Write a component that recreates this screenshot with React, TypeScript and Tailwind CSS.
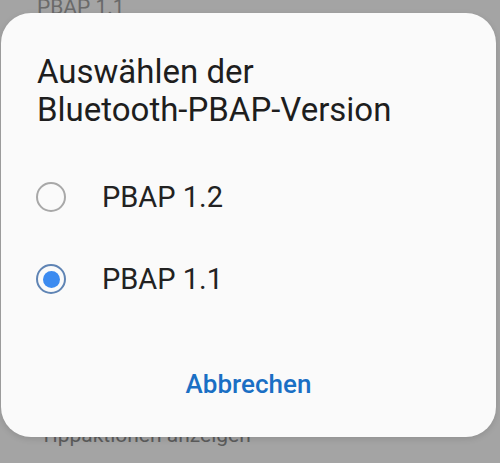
import { useState } from 'react';

const OPTIONS = ['PBAP 1.2', 'PBAP 1.1'];

function Radio({ checked }: { checked: boolean }) {
  return (
    <span
      className={`flex h-[30px] w-[30px] shrink-0 items-center justify-center rounded-full border-[2px] ${
        checked ? 'border-[#5f84b4]' : 'border-[#a8a8a8]'
      }`}
    >
      {checked && <span className="h-[17px] w-[17px] rounded-full bg-[#3c8bf0]" />}
    </span>
  );
}

export default function App() {
  const [selected, setSelected] = useState('PBAP 1.1');

  return (
    <div className="relative h-[463px] w-[500px] overflow-hidden bg-[#a4a4a4] font-['Roboto','Liberation_Sans',sans-serif]">
      {/* Settings list behind the dim */}
      <div className="absolute left-[37px] top-[-6px] text-[21px] leading-[26px] text-[#6a6a6a]">PBAP 1.1</div>
      <div className="absolute left-[40px] top-[422px] text-[21px] leading-[26px] text-[#5c5c5c]">
        Tippaktionen anzeigen
      </div>

      {/* Dialog */}
      <div className="absolute left-[1px] top-[13px] flex h-[424px] w-[495px] flex-col rounded-[30px] bg-[#fafafa] shadow-[0_2px_6px_rgba(0,0,0,0.12)]">
        <h2 className="px-[36px] pt-[40px] text-[33px] font-normal leading-[38px] text-[#1e1e1e]">
          Auswählen der
          <br />
          Bluetooth-PBAP-Version
        </h2>

        <div className="mt-[27px] flex flex-col">
          {OPTIONS.map((opt) => (
            <button
              key={opt}
              type="button"
              onClick={() => setSelected(opt)}
              className="flex h-[82px] items-center gap-[36px] px-[35px] text-left"
            >
              <Radio checked={selected === opt} />
              <span className="text-[29px] leading-[34px] text-[#222222]">{opt}</span>
            </button>
          ))}
        </div>

        <div className="mt-auto flex justify-center pb-[38px]">
          <button type="button" className="text-[26px] font-medium leading-[30px] text-[#1a6fc4]">
            Abbrechen
          </button>
        </div>
      </div>
    </div>
  );
}
